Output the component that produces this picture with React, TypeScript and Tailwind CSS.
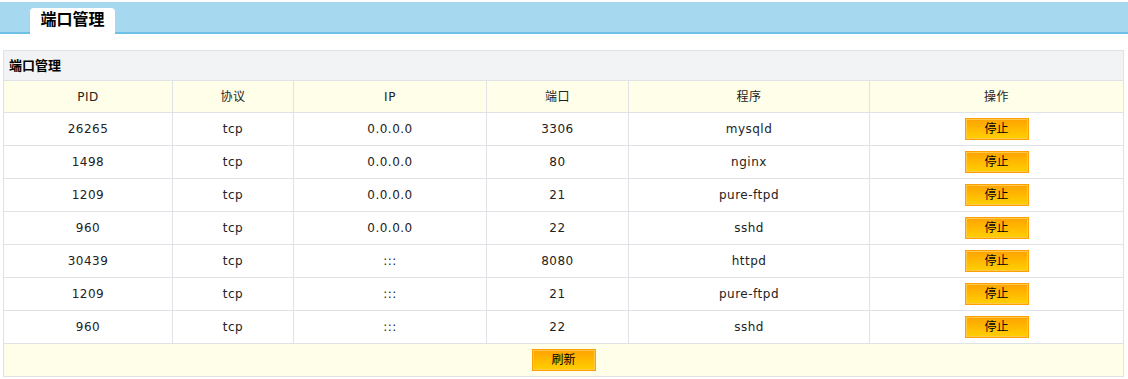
import React from "react";

const rows = [
  ["26265", "tcp", "0.0.0.0", "3306", "mysqld"],
  ["1498", "tcp", "0.0.0.0", "80", "nginx"],
  ["1209", "tcp", "0.0.0.0", "21", "pure-ftpd"],
  ["960", "tcp", "0.0.0.0", "22", "sshd"],
  ["30439", "tcp", ":::", "8080", "httpd"],
  ["1209", "tcp", ":::", "21", "pure-ftpd"],
  ["960", "tcp", ":::", "22", "sshd"],
];

const widths = ["w-[169px]", "w-[121px]", "w-[193px]", "w-[142px]", "w-[241px]", "flex-1"];

function Btn({ label }: { label: string }) {
  return (
    <button className="w-[64px] h-[22px] border border-[#ff9f00] bg-gradient-to-b from-[#ffa200] to-[#ffd000] text-[12px] text-black leading-[20px] shadow-[inset_0_0_0_1px_#ffc84a]">
      {label}
    </button>
  );
}

export default function App() {
  const font = { fontFamily: '"DejaVu Sans", "Noto Sans CJK SC", sans-serif' };
  return (
    <div className="w-[1128px] h-[379px] bg-white text-[12px] text-[#222]" style={font}>
      <div className="pt-[2px]">
        <div className="h-[32px] bg-[#a6d9ef] border-b-2 border-[#6fc0e6] flex items-end pl-[30px]">
          <div className="w-[85px] h-[26px] bg-white rounded-t-[4px] flex items-center justify-center text-[16px] font-bold text-black -mb-[2px] pb-[2px]">
            端口管理
          </div>
        </div>
      </div>
      <div className="mt-[16px] mx-[3px] w-[1121px] border border-[#dfe2e7]">
        <div className="h-[30px] bg-[#f2f3f5] border-b border-[#dfe2e7] flex items-center pl-[5px] text-[13px] font-bold text-black">
          端口管理
        </div>
        <div className="h-[32px] bg-[#fefee9] border-b border-[#dfe2e7] flex">
          {["PID", "协议", "IP", "端口", "程序", "操作"].map((h, i) => (
            <div key={i} className={`${widths[i]} flex items-center justify-center ${i < 5 ? "border-r border-[#dfe2e7]" : ""} tracking-[0.5px]`}>
              {h}
            </div>
          ))}
        </div>
        {rows.map((r, ri) => (
          <div key={ri} className="h-[33px] border-b border-[#dfe2e7] flex">
            {r.map((c, i) => (
              <div key={i} className={`${widths[i]} flex items-center justify-center border-r border-[#dfe2e7] tracking-[0.5px]`}>
                {c}
              </div>
            ))}
            <div className="flex-1 flex items-center justify-center">
              <Btn label="停止" />
            </div>
          </div>
        ))}
        <div className="h-[32px] bg-[#fefee9] flex items-center justify-center">
          <Btn label="刷新" />
        </div>
      </div>
    </div>
  );
}
